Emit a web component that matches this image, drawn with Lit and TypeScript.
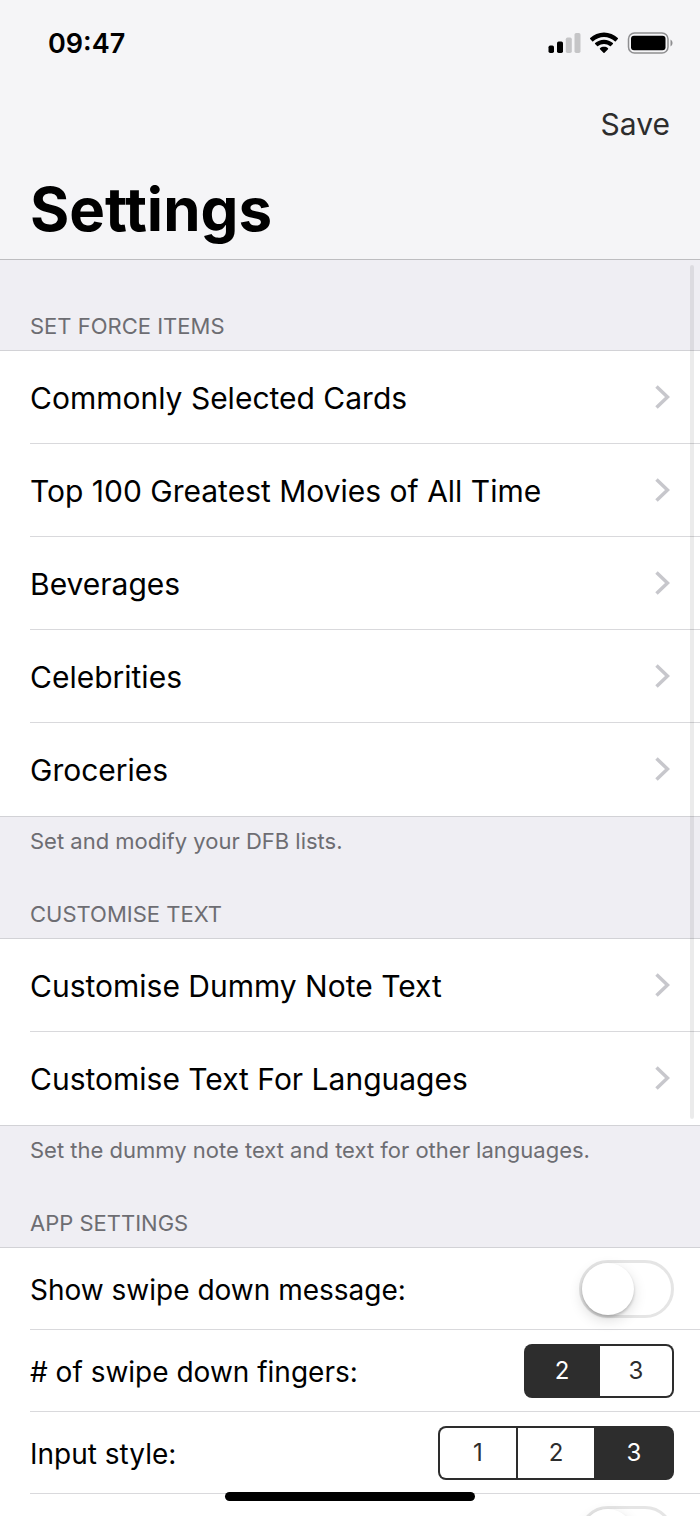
import { LitElement, html, css, svg } from "lit";
import { customElement, property, state } from "lit/decorators.js";

@customElement("status-bar")
class StatusBar extends LitElement {
  static styles = css`
    :host {
      display: flex;
      align-items: center;
      justify-content: space-between;
      height: 86px;
      padding: 0 27px 0 48px;
    }
    .time {
      padding-top: 2px;
      font-size: 27px;
      line-height: 32px;
      font-weight: 600;
    }
    .icons {
      display: flex;
      align-items: center;
      gap: 9px;
    }
    svg {
      display: block;
    }
  `;

  render() {
    return html`
      <span class="time">09:47</span>
      <span class="icons">
        <svg width="33" height="22" viewBox="0 0 33 22" role="img" aria-label="Signal, 2 of 4 bars">
          <rect x="0.5" y="13.5" width="5.5" height="7.5" rx="1.700" />
          <rect x="9" y="9.500" width="6" height="11.500" rx="1.700" />
          <rect x="17.800" y="5.500" width="6" height="15.500" rx="1.700" fill="#c5c5c7" />
          <rect x="26.500" y="1" width="6" height="20" rx="1.700" fill="#c5c5c7" />
        </svg>
        <svg width="28" height="22" viewBox="0 0 28 22" role="img" aria-label="Wi-Fi">
          <path d="M14 0.500C19.300 0.500 24.200 2.600 27.800 6.100C28.100 6.400 28.100 6.800 27.800 7.100L25.800 9.200C25.500 9.500 25.100 9.500 24.800 9.200C21.900 6.500 18.100 4.900 14 4.900C9.900 4.900 6.100 6.500 3.200 9.200C2.900 9.500 2.500 9.500 2.200 9.200L0.200 7.100C-0.100 6.800-0.100 6.400 0.200 6.100C3.800 2.600 8.700 0.500 14 0.500Z" />
          <path d="M14 7.700C17.400 7.700 20.500 9 22.900 11.100C23.200 11.400 23.200 11.800 22.900 12.100L20.900 14.100C20.600 14.400 20.200 14.400 19.900 14.100C18.300 12.800 16.200 12 14 12C11.800 12 9.700 12.800 8.100 14.100C7.800 14.400 7.400 14.400 7.100 14.100L5.100 12.100C4.800 11.800 4.800 11.400 5.100 11.100C7.500 9 10.600 7.700 14 7.700Z" />
          <path d="M14 14.800C15.500 14.800 16.900 15.300 18 16.200C18.300 16.500 18.300 16.900 18 17.200L14.500 20.700C14.200 21 13.800 21 13.500 20.700L10 17.200C9.700 16.900 9.700 16.500 10 16.200C11.100 15.300 12.500 14.800 14 14.800Z" />
        </svg>
        <svg width="46" height="22" viewBox="0 0 46 22" role="img" aria-label="Battery full">
          <rect x="1.500" y="1" width="39.500" height="20" rx="6" fill="none" stroke="#8e8e90" stroke-width="1.500" />
          <rect x="4" y="3.700" width="34.500" height="14.600" rx="3" />
          <path d="M43.500 7.500C44.800 8.200 45.500 9.500 45.500 11C45.500 12.500 44.800 13.800 43.500 14.500Z" fill="#8e8e90" />
        </svg>
      </span>
    `;
  }
}

@customElement("toggle-switch")
class ToggleSwitch extends LitElement {
  @property() label = "";
  @state() private on = false;

  static styles = css`
    :host {
      display: block;
    }
    .switch {
      appearance: none;
      display: flex;
      box-sizing: border-box;
      width: 95px;
      height: 58px;
      margin: 0;
      padding: 0;
      border: 3px solid #e5e5e5;
      border-radius: 29px;
      background: #fff;
      cursor: pointer;
    }
    .switch::before {
      content: "";
      width: 52px;
      height: 52px;
      border-radius: 50%;
      background: #fff;
      box-shadow: 0 5px 14px rgba(0, 0, 0, 0.14), 0 2px 3px rgba(0, 0, 0, 0.2);
    }
    .switch:checked {
      justify-content: flex-end;
      border-color: #4cd964;
      background: #4cd964;
    }
  `;

  render() {
    return html`<input
      class="switch"
      type="checkbox"
      role="switch"
      aria-label=${this.label}
      .checked=${this.on}
      @change=${(e: Event) => (this.on = (e.target as HTMLInputElement).checked)}
    />`;
  }
}

@customElement("segmented-control")
class SegmentedControl extends LitElement {
  @property() label = "";
  @property({ type: Array }) options: string[] = [];
  @property() value = "";

  static styles = css`
    .segments {
      display: flex;
      gap: 2px;
      box-sizing: border-box;
      height: 54px;
      margin: 0;
      padding: 2px;
      border: 0;
      border-radius: 8px;
      background: #2d2d2d;
    }
    .segment {
      display: flex;
      align-items: center;
      justify-content: center;
      min-width: 72px;
      background: #fff;
      color: #2d2d2d;
      font-size: 24px;
      line-height: 32px;
      cursor: pointer;
    }
    .wide .segment {
      min-width: 76px;
    }
    .segment:first-child {
      border-radius: 6px 0 0 6px;
    }
    .segment:last-child {
      border-radius: 0 6px 6px 0;
    }
    .segment:has(:checked) {
      background: #2d2d2d;
      color: #fff;
    }
    .radio {
      appearance: none;
      width: 0;
      height: 0;
      margin: 0;
    }
  `;

  render() {
    return html`
      <fieldset
        class="segments ${this.options.length > 2 ? "wide" : ""}"
        aria-label=${this.label}
      >
        ${this.options.map(
          (option) => html`<label class="segment">
            <input
              class="radio"
              type="radio"
              name="choice"
              .value=${option}
              .checked=${option === this.value}
              @change=${() => (this.value = option)}
            />${option}
          </label>`
        )}
      </fieldset>
    `;
  }
}

const chevron = svg`<path d="M1.500 1.500L12.500 12L1.500 22.500" fill="none" stroke="#c7c7cc" stroke-width="3.500" />`;

interface LinkGroup {
  title: string;
  items: string[];
  note: string;
}

const groups: LinkGroup[] = [
  {
    title: "SET FORCE ITEMS",
    items: [
      "Commonly Selected Cards",
      "Top 100 Greatest Movies of All Time",
      "Beverages",
      "Celebrities",
      "Groceries",
    ],
    note: "Set and modify your DFB lists.",
  },
  {
    title: "CUSTOMISE TEXT",
    items: ["Customise Dummy Note Text", "Customise Text For Languages"],
    note: "Set the dummy note text and text for other languages.",
  },
];

@customElement("app-root")
class AppRoot extends LitElement {
  static styles = css`
    :host {
      display: flex;
      flex-direction: column;
      position: relative;
      height: 100vh;
      overflow: hidden;
      background: #efeef3;
      color: #000;
      font-family: Inter, "Liberation Sans", sans-serif;
    }
    .header {
      flex: none;
      background: #f5f5f7;
      border-bottom: 1px solid #bdbdc0;
    }
    .actions {
      display: flex;
      justify-content: flex-end;
      padding: 18px 30px 0;
    }
    .save {
      padding: 0;
      border: 0;
      background: none;
      color: #2d2d2d;
      font: inherit;
      font-size: 30px;
      line-height: 40px;
      cursor: pointer;
    }
    .title {
      margin: 0;
      padding: 25px 30px 10px;
      font-size: 60px;
      line-height: 80px;
      font-weight: 700;
    }
    .content {
      position: relative;
      flex: 1;
      min-height: 0;
    }
    .list {
      height: 100%;
      overflow: hidden;
    }
    .caption {
      display: flex;
      flex-direction: column;
      justify-content: space-between;
      box-sizing: border-box;
      min-height: 121px;
      padding: 9px 30px;
      color: #6d6d72;
      line-height: 30px;
    }
    .caption.first {
      justify-content: flex-end;
      min-height: 90px;
    }
    .heading,
    .note {
      margin: 0;
      font-size: 22px;
      font-weight: 400;
    }
    .rows {
      margin: 0;
      padding: 0;
      list-style: none;
      background: #fff;
      border-top: 1px solid #d2d2d6;
      border-bottom: 1px solid #d2d2d6;
    }
    .item {
      margin-left: 30px;
      border-bottom: 1px solid #d9d9dc;
    }
    .item:last-child {
      border-bottom-color: transparent;
    }
    .link,
    .setting {
      display: flex;
      align-items: center;
      justify-content: space-between;
      line-height: 40px;
    }
    .link {
      min-height: 92px;
      padding-right: 30px;
      color: inherit;
      text-decoration: none;
      font-size: 30px;
    }
    .setting {
      min-height: 81px;
      padding-right: 26px;
      font-size: 28px;
    }
    .text {
      padding-top: 2px;
    }
    .scroll-thumb {
      position: absolute;
      top: 5px;
      right: 6px;
      width: 4px;
      height: 68%;
      border-radius: 2px;
      background: rgba(0, 0, 0, 0.08);
    }
    .home-indicator {
      position: absolute;
      bottom: 15px;
      left: 50%;
      width: 250px;
      height: 9px;
      margin-left: -125px;
      border-radius: 5px;
      background: #000;
    }
  `;

  render() {
    return html`
      <header class="header">
        <status-bar></status-bar>
        <div class="actions"><button class="save" type="button">Save</button></div>
        <h1 class="title">Settings</h1>
      </header>
      <main class="content">
        <div class="list">
          <div class="caption first"><h2 class="heading">${groups[0].title}</h2></div>
          ${groups.map(
            (group, i) => html`
              <ul class="rows">
                ${group.items.map(
                  (item) => html`<li class="item">
                    <a class="link" href="#"
                      ><span class="text">${item}</span>
                      <svg width="15" height="24" viewBox="0 0 15 24" aria-hidden="true">
                        ${chevron}
                      </svg></a
                    >
                  </li>`
                )}
              </ul>
              <div class="caption">
                <p class="note">${group.note}</p>
                <h2 class="heading">${groups[i + 1]?.title ?? "APP SETTINGS"}</h2>
              </div>
            `
          )}
          <ul class="rows">
            <li class="item">
              <div class="setting">
                <span class="text">Show swipe down message:</span>
                <toggle-switch label="Show swipe down message"></toggle-switch>
              </div>
            </li>
            <li class="item">
              <div class="setting">
                <span class="text"># of swipe down fingers:</span>
                <segmented-control
                  label="Number of swipe down fingers"
                  .options=${["2", "3"]}
                  value="2"
                ></segmented-control>
              </div>
            </li>
            <li class="item">
              <div class="setting">
                <span class="text">Input style:</span>
                <segmented-control
                  label="Input style"
                  .options=${["1", "2", "3"]}
                  value="3"
                ></segmented-control>
              </div>
            </li>
            <li class="item">
              <div class="setting">
                <span class="text"></span>
                <toggle-switch label="Additional setting"></toggle-switch>
              </div>
            </li>
          </ul>
        </div>
        <div class="scroll-thumb"></div>
      </main>
      <div class="home-indicator"></div>
    `;
  }
}
